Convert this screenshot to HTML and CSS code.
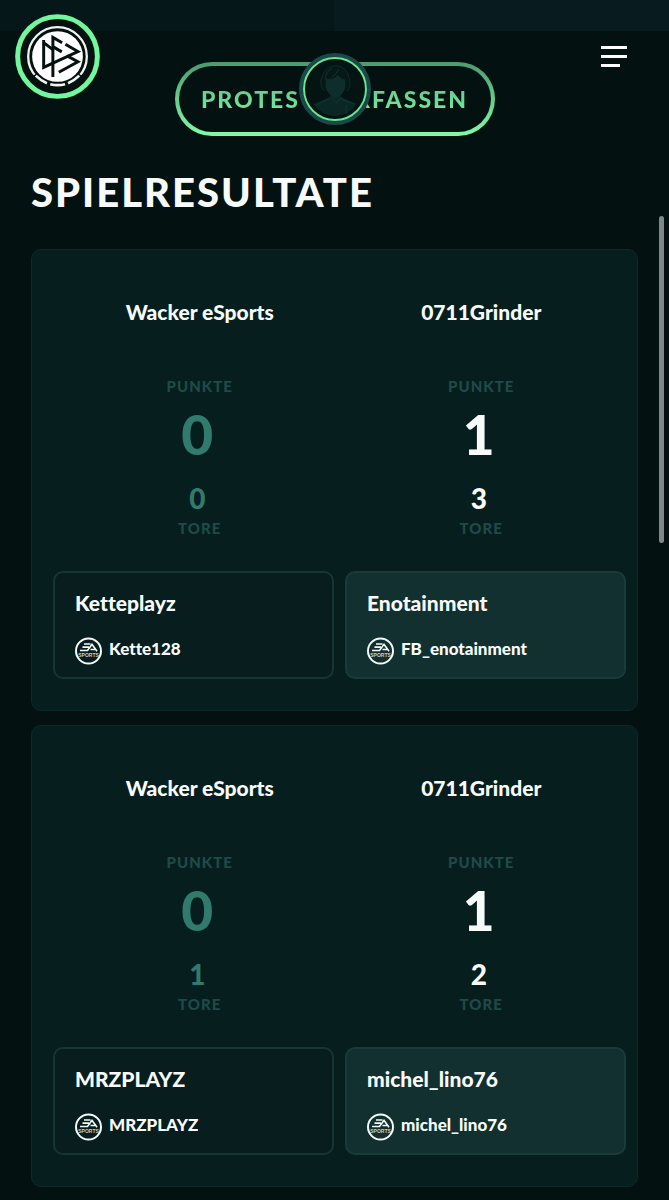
FILE: index.html
```html
<!DOCTYPE html>
<html lang="de">
<head>
<meta charset="utf-8">
<meta name="viewport" content="width=device-width, initial-scale=1">
<title>Spielresultate</title>
<link rel="stylesheet" href="styles.css">
</head>
<body>
<div class="strip"></div>
<header class="header">
  <a class="logo" href="#" aria-label="DFB">
    <svg viewBox="45 39 258 258" aria-hidden="true">
      <circle cx="174" cy="168" r="121" fill="#04110f" stroke="#72f79e" stroke-width="15"/>
      <circle cx="174" cy="168" r="89" fill="none" stroke="#eef5f3" stroke-width="7"/>
      <path d="M105 223 A88 88 0 0 0 243 223" fill="none" stroke="#04110f" stroke-width="11"/>
      <path d="M108 226Q124 242 142 249M152 252Q174 258 197 252M206 249Q225 241 240 226" fill="none" stroke="#eef5f3" stroke-width="8"/>
      <circle cx="174" cy="168" r="77" fill="#fff"/>
      <g fill="none" stroke="#04110f" stroke-width="9">
        <path d="M132 118V201L236 153L198 131M132 126L160 147"/>
        <path d="M160 230V110L188 126M160 138L187 154"/>
        <path d="M203 166L236 184L178 216"/>
      </g>
    </svg>
  </a>
  <button class="avatar" aria-label="Profil">
    <svg viewBox="0 0 64 64" aria-hidden="true">
      <path d="M9 48Q18 45 27 40V34H38V40Q47 45 55 48Q47 60 32 61Q17 60 9 48Z" fill="#0a2725"/>
      <path d="M20 34Q14 26 19 17Q22 7 34 7Q45 9 47 20Q50 30 45 34" fill="#061917" stroke="#0d302c"/>
      <path d="M22 21Q32 22 35 17Q38 21 43 22V30Q40 40 33 42Q25 39 22 31Z" fill="#0d2f2b"/>
      <path d="M22 21Q22 13 29 10M29 19Q34 16 36 11M12 49Q22 44 26 43M39 43L53 48M44 49v10M28 41l5 6 6-6" fill="none" stroke="#123a35"/>
    </svg>
  </button>
  <button class="menu" aria-label="Menü">
    <svg viewBox="0 0 26 22" aria-hidden="true"><path d="M0 1.500H26M0 10.500H26M0 19.500H19" stroke="#fff" stroke-width="3"/></svg>
  </button>
</header>
<main class="page">
  <button class="protest"><span>PROTEST VERFASSEN</span></button>
  <h1 class="title">SPIELRESULTATE</h1>
  <section class="card">
    <div class="teams">
      <div class="team lost">
        <h2 class="team-name">Wacker eSports</h2>
        <span class="label">PUNKTE</span><strong class="points">0</strong>
        <strong class="goals">0</strong><span class="label">TORE</span>
      </div>
      <div class="team">
        <h2 class="team-name">0711Grinder</h2>
        <span class="label">PUNKTE</span><strong class="points">1</strong>
        <strong class="goals">3</strong><span class="label">TORE</span>
      </div>
    </div>
    <div class="players">
      <article class="player">
        <h3 class="player-name">Ketteplayz</h3>
        <div class="tag"><svg class="ea" viewBox="0 0 27 27"><circle cx="13.500" cy="13.500" r="12.500"/><path d="M9 6.500h6.500M7.500 9.600h6.500M5 13h7.500L17 6.800l5 7M15.500 12h4.500"/><text x="13.500" y="19">SPORTS</text></svg><span>Kette128</span></div>
      </article>
      <article class="player winner">
        <h3 class="player-name">Enotainment</h3>
        <div class="tag"><svg class="ea" viewBox="0 0 27 27"><circle cx="13.500" cy="13.500" r="12.500"/><path d="M9 6.500h6.500M7.500 9.600h6.500M5 13h7.500L17 6.800l5 7M15.500 12h4.500"/><text x="13.500" y="19">SPORTS</text></svg><span>FB_enotainment</span></div>
      </article>
    </div>
  </section>
  <section class="card">
    <div class="teams">
      <div class="team lost">
        <h2 class="team-name">Wacker eSports</h2>
        <span class="label">PUNKTE</span><strong class="points">0</strong>
        <strong class="goals">1</strong><span class="label">TORE</span>
      </div>
      <div class="team">
        <h2 class="team-name">0711Grinder</h2>
        <span class="label">PUNKTE</span><strong class="points">1</strong>
        <strong class="goals">2</strong><span class="label">TORE</span>
      </div>
    </div>
    <div class="players">
      <article class="player">
        <h3 class="player-name">MRZPLAYZ</h3>
        <div class="tag"><svg class="ea" viewBox="0 0 27 27"><circle cx="13.500" cy="13.500" r="12.500"/><path d="M9 6.500h6.500M7.500 9.600h6.500M5 13h7.500L17 6.800l5 7M15.500 12h4.500"/><text x="13.500" y="19">SPORTS</text></svg><span>MRZPLAYZ</span></div>
      </article>
      <article class="player winner">
        <h3 class="player-name">michel_lino76</h3>
        <div class="tag"><svg class="ea" viewBox="0 0 27 27"><circle cx="13.500" cy="13.500" r="12.500"/><path d="M9 6.500h6.500M7.500 9.600h6.500M5 13h7.500L17 6.800l5 7M15.500 12h4.500"/><text x="13.500" y="19">SPORTS</text></svg><span>michel_lino76</span></div>
      </article>
    </div>
  </section>
</main>
<div class="scroll-thumb"></div>
</body>
</html>
```
FILE: styles.css
```css
* { box-sizing: border-box; }
body {
  margin: 0;
  background: #031211;
  color: #f7fcfb;
  font-family: Lato, "Liberation Sans", sans-serif;
  font-weight: 700;
  font-variant-ligatures: none;
}
button { padding: 0; border: 0; background: none; font: inherit; color: inherit; cursor: pointer; }
h1, h2, h3 { margin: 0; }
svg { display: block; }
.strip { height: 31px; background: linear-gradient(90deg, #06171a 50%, #081c20 50%); }
.header {
  position: fixed;
  z-index: 2;
  top: 0;
  left: 0;
  right: 0;
  display: grid;
  grid-template-columns: 1fr auto 1fr;
  align-items: start;
  padding: 14px 42px 0 15px;
}
.logo { width: 85px; }
.avatar {
  width: 72px;
  height: 72px;
  margin: 39px 0 0 27px;
  border: 4px solid #1b4947;
  border-radius: 50%;
  background: #041412;
}
.avatar svg { width: 100%; border: 2px solid #66e596; border-radius: 50%; }
.menu { justify-self: end; width: 26px; margin-top: 32px; }
.page { padding: 31px 31px 13px; }
.protest {
  display: block;
  width: 320px;
  height: 74px;
  margin: 0 auto;
  border: 4px solid transparent;
  border-radius: 37px;
  background: linear-gradient(#031211, #031211) padding-box, linear-gradient(#4b9a71, #80fba8) border-box;
  font-size: 23px;
  font-weight: 900;
  letter-spacing: 2px;
  white-space: nowrap;
}
.protest span { background: linear-gradient(#68c58d, #70ed9c); background-clip: text; color: transparent; }
.title { margin: 32px 0 33px; font-size: 40px; line-height: 48px; font-weight: 900; letter-spacing: 2px; }
.card { padding: 50px 11px 31px 21px; border: 1px solid #0d2929; border-radius: 10px; background: #071e1f; }
.card + .card { margin-top: 14px; }
.teams { display: grid; grid-template-columns: 1fr 1fr; padding: 0 4px 0 6px; text-align: center; }
.team { display: flex; flex-direction: column; }
.team-name { margin-bottom: 52px; font-size: 21px; line-height: 24px; font-weight: 900; }
.label { color: #1e4b49; font-size: 15px; line-height: 20px; font-weight: 900; letter-spacing: 1px; }
.points { margin: 8px 0 18px; padding-right: 5px; font-size: 55px; line-height: 60px; font-weight: 900; }
.goals { margin-bottom: 4px; padding-right: 5px; font-size: 28px; line-height: 32px; font-weight: 900; }
.lost .points, .lost .goals { color: #307a6e; }
.players { display: grid; grid-template-columns: 1fr 1fr; gap: 11px; margin-top: 33px; }
.player { min-width: 0; padding: 18px 20px 12px; border: 2px solid #153635; border-radius: 10px; background: #071d1e; }
.winner { background: #123030; border-color: #193b39; }
.player-name { margin-bottom: 22px; font-size: 21px; line-height: 24px; font-weight: 900; }
.tag { display: flex; gap: 7px; height: 28px; font-size: 17px; line-height: 24px; font-weight: 900; }
.ea { flex: none; width: 27px; height: 28px; fill: none; stroke: #f4fbf8; stroke-width: 2; }
.ea path { stroke-width: 1.6; }
.ea text { fill: #c3d0cd; stroke: none; font-family: "Liberation Sans", Arial, sans-serif; font-size: 5px; text-anchor: middle; }
.scroll-thumb { position: fixed; z-index: 3; top: 216px; right: 5px; width: 5px; height: 327px; border-radius: 3px; background: #808887; }
```
